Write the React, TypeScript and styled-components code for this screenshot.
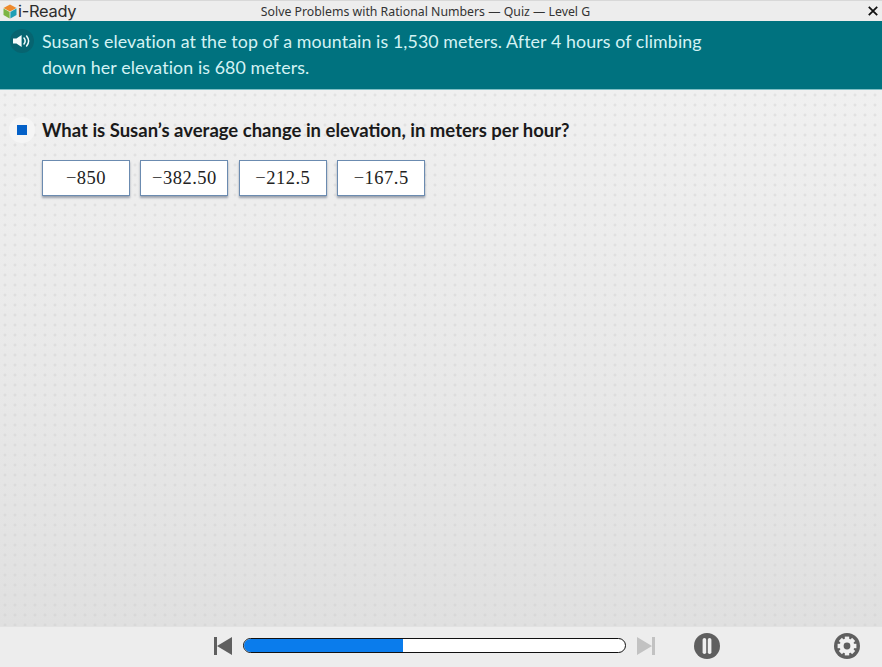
import React, { FC } from 'react'
import styled, { createGlobalStyle } from 'styled-components'

const GlobalStyle = createGlobalStyle`
  html, body {
    margin: 0;
    padding: 0;
    height: 100%;
    overflow: hidden;
  }
  #root {
    height: 100%;
  }
`

const Page = styled.div`
  display: flex;
  flex-direction: column;
  width: 882px;
  height: 667px;
  font-family: "Lato", "Open Sans", sans-serif;
  background: #ececec;
`

const TitleBar = styled.header`
  display: grid;
  grid-template-columns: 1fr auto 1fr;
  align-items: center;
  height: 21px;
  box-sizing: border-box;
  padding: 0 4px 0 3px;
  background: #ededed;
  border-top: 1px solid #d8d8d8;
`

const Logo = styled.div`
  display: flex;
  align-items: center;
  gap: 1px;
  font-family: "Inter", sans-serif;
  font-size: 16.4px;
  letter-spacing: -0.25px;
  line-height: 18px;
  color: #2c2c2c;
`

const Title = styled.div`
  font-family: "Noto Sans", sans-serif;
  font-size: 12.3px;
  color: #333;
  transform: translateX(-15px);
`

const CloseButton = styled.button`
  justify-self: end;
  display: flex;
  padding: 0;
  border: 0;
  background: none;
  color: #111;
`

const Banner = styled.section`
  display: flex;
  gap: 8px;
  height: 69px;
  box-sizing: border-box;
  padding: 7px 12px 0 10px;
  background: #00727f;
  border-bottom: 1px solid #7fc0c6;
`

const SpeakerBadge = styled.div`
  display: flex;
  align-items: center;
  justify-content: center;
  flex: none;
  width: 24px;
  height: 24px;
  margin-top: 1px;
  border-radius: 50%;
  background: #066470;
`

const BannerText = styled.p`
  margin: 0;
  width: 680px;
  font-size: 17.8px;
  line-height: 26px;
  color: #d4f2f4;
  letter-spacing: 0.1px;
`

const Content = styled.main`
  flex: 1;
  display: flex;
  flex-direction: column;
  box-sizing: border-box;
  padding: 27px 0 0 9px;
  background-color: #e8e8e8;
  background-image:
    radial-gradient(circle at center, rgba(205, 205, 205, 0.4) 1.2px, transparent 1.8px),
    linear-gradient(to bottom, #f0f0f0 0%, #e9e9e9 50%, #e0e0e0 100%);
  background-size: 10px 10px, 100% 100%;
`

const Question = styled.div`
  display: flex;
  align-items: center;
  gap: 7px;
`

const Bullet = styled.div`
  display: flex;
  align-items: center;
  justify-content: center;
  width: 26px;
  height: 26px;
  border-radius: 50%;
  background: #f5f5f5;
`

const BulletSquare = styled.div`
  width: 10px;
  height: 10px;
  background: #0461c8;
`

const QuestionText = styled.h2`
  margin: 0;
  font-size: 18.5px;
  font-weight: 700;
  color: #1a1a1a;
`

const Choices = styled.div`
  display: flex;
  gap: 10.4px;
  margin: 17px 0 0 33px;
`

const Choice = styled.button`
  width: 86px;
  height: 34px;
  box-sizing: content-box;
  padding: 0;
  border: 1px solid #6b8bb0;
  background: #fff;
  box-shadow: 0 2px 2px rgba(90, 100, 120, 0.55);
  font-family: "Liberation Serif", serif;
  font-size: 18.5px;
  letter-spacing: 0.5px;
  color: #222;
`

const Footer = styled.footer`
  display: flex;
  align-items: center;
  height: 41px;
  box-sizing: border-box;
  padding: 0 22px 3px 213px;
  background: #ededed;
  border-top: 1px solid #e2e2e2;
`

const ProgressTrack = styled.div`
  width: 381px;
  height: 13px;
  margin-left: 10px;
  border: 1px solid #111;
  border-radius: 8px;
  background: #fff;
  overflow: hidden;
`

const ProgressFill = styled.div`
  height: 100%;
  background: #0a7cec;
`

const NavIcon = styled.svg<{ $dim?: boolean }>`
  display: block;
  flex: none;
  color: ${props => (props.$dim ? '#c2c2c2' : '#5f5f5f')};
  margin-left: ${props => (props.$dim ? '10px' : '0')};
`

const PauseButton = styled.svg`
  display: block;
  flex: none;
  margin-left: 38px;
`

const SettingsButton = styled.svg`
  display: block;
  flex: none;
  margin-left: auto;
`

const LogoCube: FC = () => (
  <svg width="14" height="15" viewBox="0 0 14 15">
    <path d="M7 .5 13.5 4 7 7.5.5 4Z" fill="#ee8a2c" />
    <path d="M.5 4.4 6.6 8v6.6L.5 11Z" fill="#7db544" />
    <path d="M13.5 4.4 7.4 8v6.6l6.1-3.6Z" fill="#1f9fb4" />
  </svg>
)

const Speaker: FC = () => (
  <svg width="18" height="14" viewBox="0 0 18 14">
    <path d="M0 4.5h3.4L8.6 1v12L3.4 9.5H0Z" fill="#f4fbfb" />
    <path d="M11 4c1.4 1.8 1.4 4.2 0 6M13.6 2c2.4 3 2.4 7 0 10" fill="none" stroke="#f4fbfb" strokeWidth="1.5" strokeLinecap="round" />
  </svg>
)

const Gear: FC = () => {
  const teeth = [0, 45, 90, 135, 180, 225, 270, 315]
  return (
    <SettingsButton width="26" height="26" viewBox="0 0 26 26">
      <circle cx="13" cy="13" r="13" fill="#5f5f5f" />
      {teeth.map(angle => (
        <rect key={angle} x="10.8" y="3.6" width="4.4" height="4.4" fill="#f0f0f0" transform={`rotate(${angle} 13 13)`} />
      ))}
      <circle cx="13" cy="13" r="7.4" fill="#f0f0f0" />
      <circle cx="13" cy="13" r="3.4" fill="#5f5f5f" />
    </SettingsButton>
  )
}

const choices = ['−850', '−382.50', '−212.5', '−167.5']

const App: FC = () => {
  return (
    <Page>
      <GlobalStyle />
      <TitleBar>
        <Logo>
          <LogoCube />
          i-Ready
        </Logo>
        <Title>Solve Problems with Rational Numbers — Quiz — Level G</Title>
        <CloseButton aria-label="Close">
          <svg width="10" height="10" viewBox="0 0 10 10">
            <path d="M.8.8l8.4 8.4M9.2.8 .8 9.2" stroke="currentColor" strokeWidth="1.8" />
          </svg>
        </CloseButton>
      </TitleBar>
      <Banner>
        <SpeakerBadge>
          <Speaker />
        </SpeakerBadge>
        <BannerText>
          Susan’s elevation at the top of a mountain is 1,530 meters. After 4 hours of climbing down her elevation is 680 meters.
        </BannerText>
      </Banner>
      <Content>
        <Question>
          <Bullet>
            <BulletSquare />
          </Bullet>
          <QuestionText>What is Susan’s average change in elevation, in meters per hour?</QuestionText>
        </Question>
        <Choices>
          {choices.map(choice => (
            <Choice key={choice}>{choice}</Choice>
          ))}
        </Choices>
      </Content>
      <Footer>
        <NavIcon width="20" height="20" viewBox="0 0 20 20">
          <path d="M1 1h3v18H1ZM19 1v18L4 10Z" fill="currentColor" />
        </NavIcon>
        <ProgressTrack>
          <ProgressFill style={{ width: `${(159 / 381) * 100}%` }} />
        </ProgressTrack>
        <NavIcon $dim width="20" height="20" viewBox="0 0 20 20">
          <path d="M16 1h3v18h-3ZM1 1v18l15-9Z" fill="currentColor" />
        </NavIcon>
        <PauseButton width="26" height="26" viewBox="0 0 26 26">
          <circle cx="13" cy="13" r="13" fill="#5f5f5f" />
          <rect x="8.6" y="5" width="3.6" height="16" rx="1.8" fill="#efefef" />
          <rect x="13.8" y="5" width="3.6" height="16" rx="1.8" fill="#efefef" />
        </PauseButton>
        <Gear />
      </Footer>
    </Page>
  )
}

export default App
